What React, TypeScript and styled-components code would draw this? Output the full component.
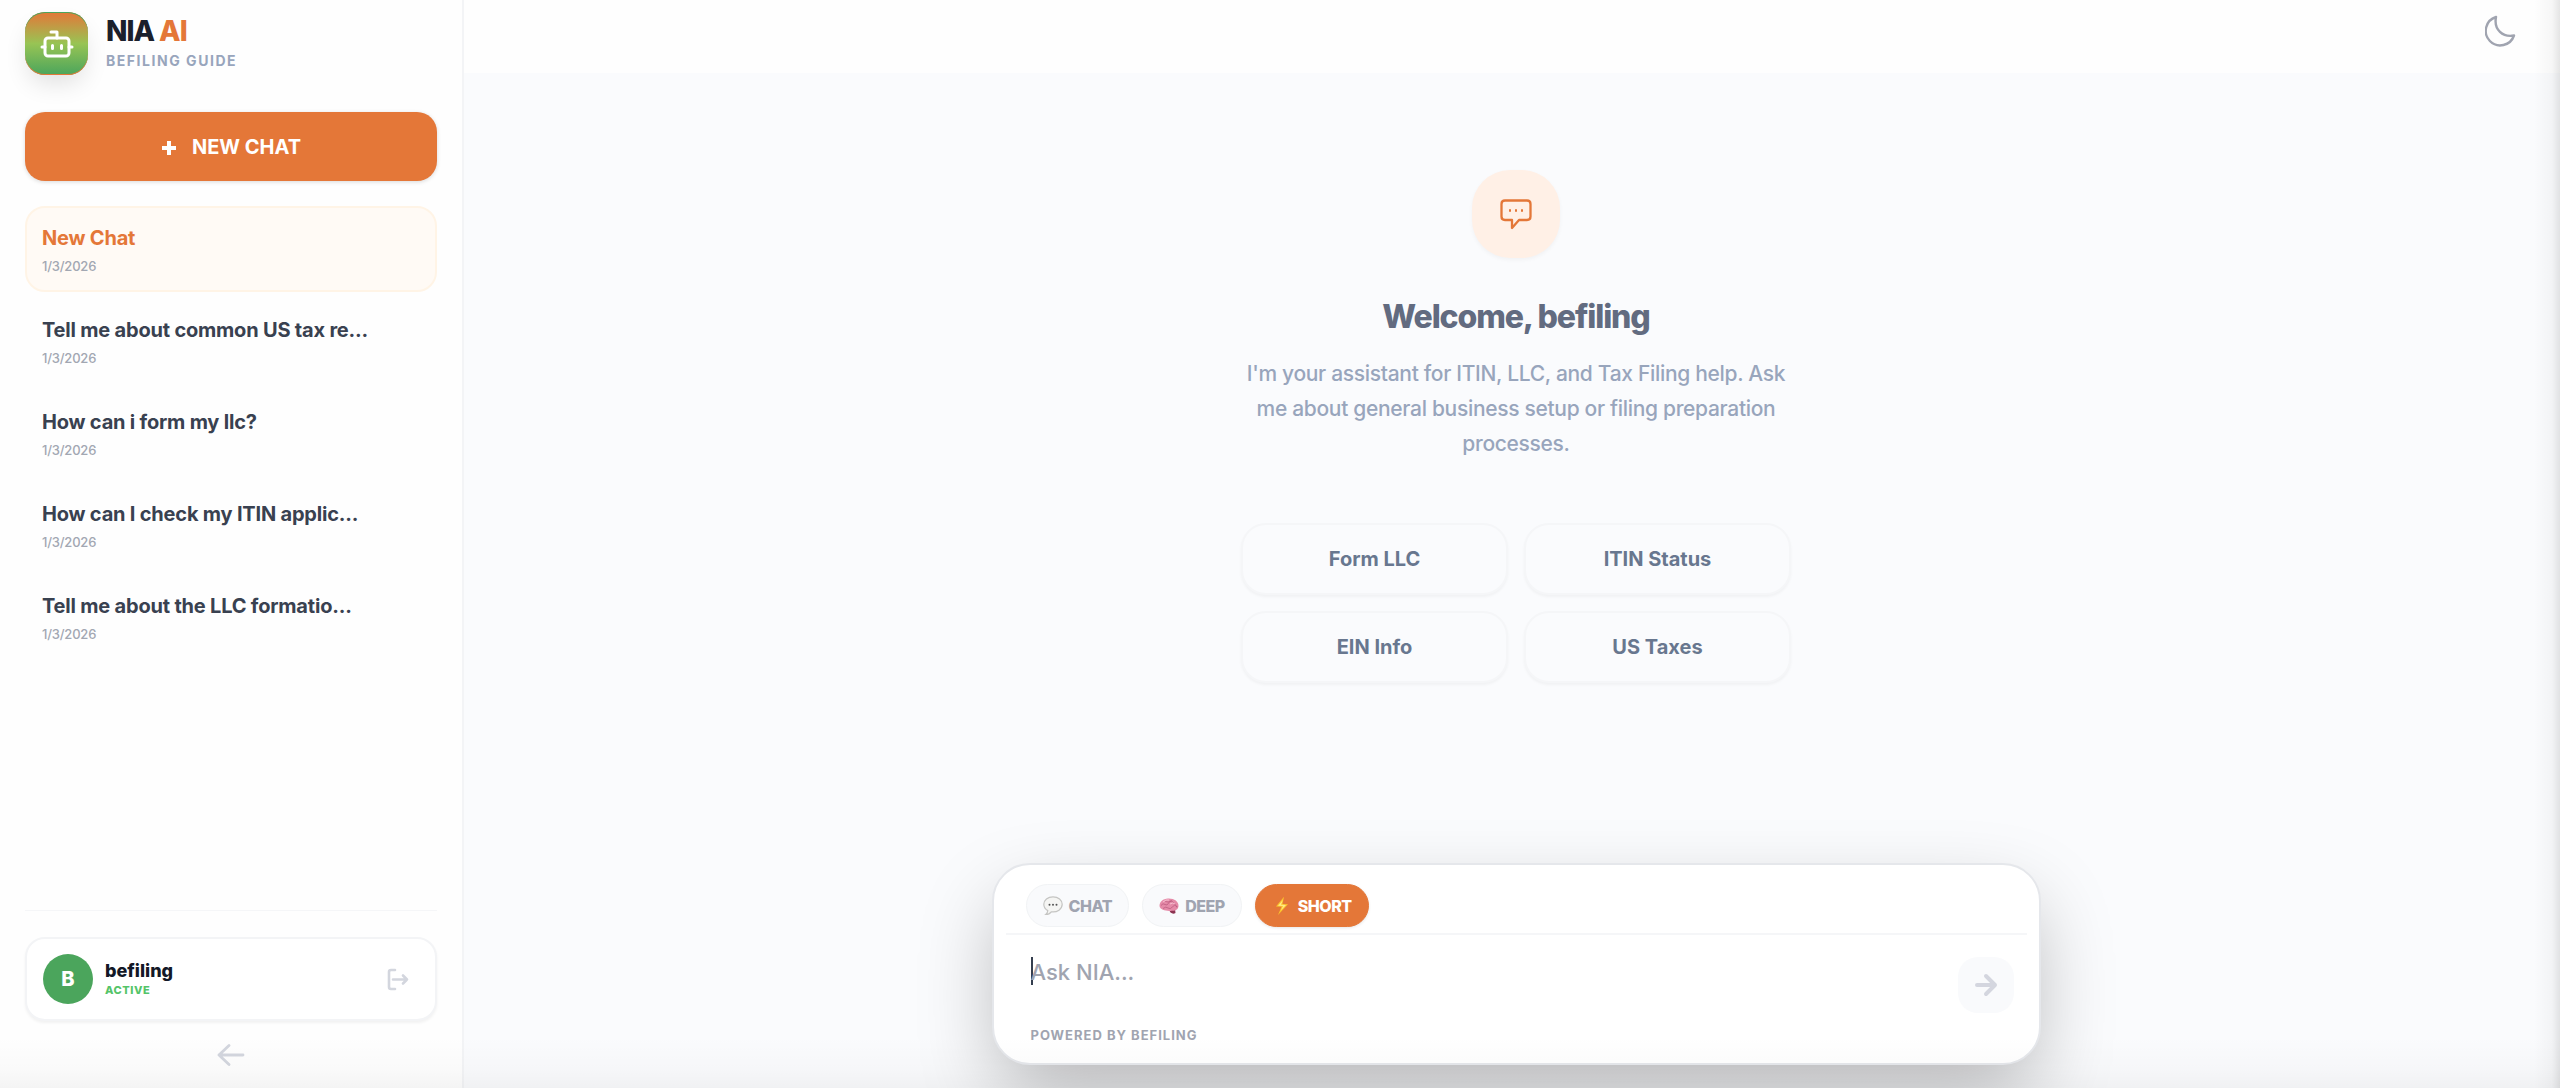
import React, { useState } from "react";
import styled, { createGlobalStyle, css } from "styled-components";

const GlobalStyle = createGlobalStyle`
  *, *::before, *::after { box-sizing: border-box; }
  body { margin: 0; background: #fafbfd; }
  body, button, textarea { font-family: Inter, "Liberation Sans", sans-serif; }
  button { margin: 0; padding: 0; border: 0; background: none; cursor: pointer; }
  h1, h2, p { margin: 0; }
`;

const Shell = styled.div`
  position: relative;
  display: flex;
  height: 100vh;
  overflow: hidden;
  background: #fafbfd;
`;

const EdgeShade = styled.div`
  position: absolute;
  inset: 0;
  pointer-events: none;
  background:
    linear-gradient(to left, rgba(0, 0, 0, 0.1), rgba(0, 0, 0, 0.03) 8px, transparent 26px),
    linear-gradient(to top, rgba(0, 0, 0, 0.04), rgba(0, 0, 0, 0.015) 20px, transparent 52px);
`;

const Sidebar = styled.aside`
  display: flex;
  flex-direction: column;
  flex: 0 0 464px;
  padding: 12px 25px 22px;
  border-right: 2px solid #f3f4f6;
  background: #fefefe;
`;

const Brand = styled.header`
  display: flex;
  gap: 18px;
  margin-bottom: 37px;
`;

const Logo = styled.div`
  display: grid;
  place-items: center;
  width: 63px;
  height: 63px;
  border-radius: 20px;
  background: linear-gradient(#e47738, #98c454 50%, #4ba55c);
  box-shadow: 0 12px 24px -4px rgba(0, 0, 0, 0.12), inset 0 1px #4ba55c, inset 0 -1px #e47738;
`;

const BrandName = styled.h1`
  padding-top: 1px;
  color: #1b202c;
  font-size: 28px;
  font-weight: 800;
  line-height: 36px;
  letter-spacing: -1px;
  span { color: #e47738; }
`;

const BrandTag = styled.p`
  color: #98a5bc;
  font-size: 14px;
  font-weight: 700;
  line-height: 24px;
  letter-spacing: 0.11em;
`;

const NewChat = styled.button`
  display: flex;
  align-items: center;
  justify-content: center;
  gap: 15px;
  height: 69px;
  margin-bottom: 25px;
  border-radius: 20px;
  background: #e47738;
  box-shadow: 0 1px 4px rgba(0, 0, 0, 0.15);
  color: #fff;
  font-size: 20px;
  font-weight: 700;
`;

const History = styled.nav`
  display: flex;
  flex: 1;
  flex-direction: column;
  gap: 6px;
`;

const HistoryItem = styled.button<{ $active?: boolean }>`
  display: flex;
  flex-direction: column;
  justify-content: center;
  gap: 4px;
  height: 86px;
  padding: 2px 15px 0;
  border: 2px solid ${(p) => (p.$active ? "#fff4e6" : "transparent")};
  border-radius: 20px;
  background: ${(p) => (p.$active ? "#fffaf5" : "transparent")};
  color: ${(p) => (p.$active ? "#e47738" : "#394150")};
  letter-spacing: -0.015em;
  text-align: left;
`;

const ItemTitle = styled.span`
  font-size: 20px;
  font-weight: 700;
  line-height: 28px;
`;

const ItemDate = styled.span`
  color: #a2a7b2;
  font-size: 13px;
  font-weight: 500;
  line-height: 20px;
`;

const Account = styled.footer`
  display: flex;
  flex-direction: column;
  align-items: center;
  gap: 23px;
  padding-top: 26px;
  border-top: 1px solid #f5f6f8;
`;

const Profile = styled.div`
  display: flex;
  align-items: center;
  gap: 12px;
  width: 100%;
  height: 84px;
  padding: 0 26px 0 16px;
  border: 2px solid #f3f4f6;
  border-radius: 20px;
  background: #fff;
  box-shadow: 0 2px 3px rgba(0, 0, 0, 0.05);
`;

const Avatar = styled.div`
  display: grid;
  place-items: center;
  width: 50px;
  height: 50px;
  border-radius: 50%;
  background: #4ba55c;
  color: #fff;
  font-size: 20px;
  font-weight: 800;
`;

const Who = styled.div`
  flex: 1;
`;

const UserName = styled.p`
  color: #131827;
  font-size: 18px;
  font-weight: 800;
  line-height: 22px;
`;

const Status = styled.p`
  color: #54c468;
  font-size: 11px;
  font-weight: 800;
  line-height: 16px;
  letter-spacing: 0.05em;
`;

const IconButton = styled.button<{ $color: string }>`
  display: grid;
  place-items: center;
  color: ${(p) => p.$color};
`;

const Main = styled.main`
  display: flex;
  flex: 1;
  flex-direction: column;
  min-width: 0;
`;

const TopBar = styled.header`
  display: flex;
  justify-content: flex-end;
  align-items: flex-start;
  height: 73px;
  padding: 15px 44px 0;
  background: #fefefe;
`;

const Conversation = styled.div`
  display: flex;
  flex: 1;
  flex-direction: column;
  padding-left: 8px;
`;

const Welcome = styled.section`
  display: flex;
  flex: 1;
  flex-direction: column;
  align-items: center;
  padding-top: 97px;
`;

const Bubble = styled.div`
  display: grid;
  place-items: center;
  width: 88px;
  height: 88px;
  border-radius: 38px;
  background: #fff0e6;
  box-shadow: 0 2px 4px rgba(0, 0, 0, 0.04);
  color: #e47738;
`;

const Greeting = styled.h2`
  margin-top: 39px;
  color: #626b80;
  font-size: 32px;
  font-weight: 800;
  line-height: 40px;
  letter-spacing: -0.035em;
`;

const Intro = styled.p`
  max-width: 550px;
  margin-top: 19px;
  color: #98a5bc;
  font-size: 21px;
  font-weight: 500;
  line-height: 35px;
  letter-spacing: -0.015em;
  text-align: center;
`;

const Topics = styled.div`
  display: grid;
  grid-template-columns: 1fr 1fr;
  gap: 16px;
  width: 100%;
  max-width: 550px;
  margin-top: 62px;
`;

const Topic = styled.button`
  height: 72px;
  border: 2px solid #f5f6f8;
  border-radius: 25px;
  background: #fafbfd;
  box-shadow: 0 2px 3px rgba(0, 0, 0, 0.04);
  color: #68778f;
  font-size: 20px;
  font-weight: 700;
`;

const Composer = styled.form`
  align-self: center;
  width: calc(100% - 50px);
  max-width: 1049px;
  margin-bottom: 23px;
  padding: 17px 12px 18px;
  border: 2px solid #e5e7eb;
  border-radius: 38px;
  background: #fff;
  box-shadow: 0 32px 80px -8px rgba(0, 0, 0, 0.28);
`;

const Modes = styled.div`
  display: flex;
  gap: 13px;
  padding: 2px 20px 6px;
  border-bottom: 2px solid #f5f6f8;
`;

const Mode = styled.button<{ $active?: boolean }>`
  display: flex;
  align-items: center;
  gap: 6px;
  height: 43px;
  padding: 0 16px;
  border: 1px solid #f1f3f5;
  border-radius: 22px;
  background: #f9fafc;
  color: #a0a4b0;
  font-size: 16px;
  font-weight: 800;
  letter-spacing: -0.03em;
  ${(p) =>
    p.$active &&
    css`
      border-color: #e47738;
      background: #e47738;
      color: #fff;
      box-shadow: 0 1px 3px rgba(0, 0, 0, 0.1);
    `}
`;

const Entry = styled.div`
  display: flex;
  align-items: flex-start;
  justify-content: space-between;
  padding: 22px 13px 0 25px;
`;

const Prompt = styled.textarea`
  flex: 1;
  height: 56px;
  padding: 0;
  border: 0;
  outline: 0;
  resize: none;
  background: none;
  color: #343e4e;
  font-size: 22px;
  font-weight: 500;
  line-height: 30px;
  &::placeholder { color: #a0a4b0; opacity: 1; }
`;

const Caret = styled.span`
  width: 2px;
  height: 28px;
  margin-right: -2px;
  background: #343e4e;
`;

const Send = styled.button`
  display: grid;
  place-items: center;
  width: 56px;
  height: 56px;
  border-radius: 20px;
  background: #f9fafc;
  color: #d4d6df;
`;

const Powered = styled.p`
  padding: 12px 25px 0;
  color: #a0a4b0;
  font-size: 13px;
  font-weight: 700;
  line-height: 20px;
  letter-spacing: 1px;
`;

const BotIcon = () => (
  <svg width="36" height="36" viewBox="0 0 24 24" fill="none" stroke="currentColor" strokeWidth="2" strokeLinecap="round" strokeLinejoin="round" color="#fff">
    <path d="M12 8V4H8" />
    <rect width="16" height="12" x="4" y="8" rx="2" />
    <path d="M2 14h2M20 14h2M15 13v2M9 13v2" />
  </svg>
);

const PlusIcon = () => (
  <svg width="16" height="16" viewBox="0 0 16 16" fill="none" stroke="currentColor" strokeWidth="4">
    <path d="M8 2v14M1 9h14" />
  </svg>
);

const LogoutIcon = () => (
  <svg width="22" height="23" viewBox="0 0 22 23" fill="none" stroke="currentColor" strokeWidth="2.600" strokeLinecap="round" strokeLinejoin="round">
    <path d="M8 2H4Q2 2 2 4V19Q2 21 4 21H8M6 11.500H20M16 7.500L20 11.500L16 15.500" />
  </svg>
);

const BackIcon = () => (
  <svg width="28" height="22" viewBox="0 0 28 22" fill="none" stroke="currentColor" strokeWidth="2.800" strokeLinecap="round" strokeLinejoin="round">
    <path d="M26 11H2M12 1.500L2 11L12 20.500" />
  </svg>
);

const MoonIcon = () => (
  <svg width="31" height="32" viewBox="0 0 31 32" fill="none" stroke="currentColor" strokeWidth="2.400" strokeLinejoin="round">
    <path d="M11 2A14.500 14.500 0 1 0 29 20.500C18 22.500 8.500 15 11 2Z" />
  </svg>
);

const BubbleIcon = () => (
  <svg width="32" height="31" viewBox="0 0 32 31" fill="none" stroke="currentColor" strokeWidth="2.300" strokeLinejoin="round">
    <path d="M5 1.500H27Q30.500 1.500 30.500 5V17.500Q30.500 21 27 21H19L12 29V21H5Q1.500 21 1.500 17.500V5Q1.500 1.500 5 1.500Z" />
    <path d="M9 11.500h2M15 11.500h2M21 11.500h2" />
  </svg>
);

const SendIcon = () => (
  <svg width="24" height="24" viewBox="0 0 24 24" fill="none" stroke="currentColor" strokeWidth="4" strokeLinecap="round" strokeLinejoin="round">
    <path d="M3 12H21M12 3L21 12L12 21" />
  </svg>
);

const SpeechEmoji = () => (
  <svg width="20" height="20" viewBox="0 0 20 20">
    <path d="M10 .8C4.800 .8 .8 4 .8 8.300c0 2.800 1.600 5 4 6.300 0 1.700-.8 2.900-2 3.900 2.500 0 4.300-1 5.500-2.700 6 .8 10.900-2.700 10.900-7.500C19.200 4 15.200 .8 10 .8Z" fill="#f5f5f3" stroke="#c5c5c3" strokeWidth="1.200" />
    <g fill="#555"><circle cx="6.500" cy="8.800" r="1" /><circle cx="10" cy="8.800" r="1" /><circle cx="13.500" cy="8.800" r="1" /></g>
  </svg>
);

const BrainEmoji = () => (
  <svg width="20" height="20" viewBox="0 0 20 20">
    <path d="M10 14L16 13L16.500 17Q14 18.500 11.500 16.500Z" fill="#8d3452" />
    <path d="M.5 10C.5 6 4 2.800 9 2.600c6-.3 10.700 2.900 10.500 7.400-.2 3.500-3 5-6.500 4.700C8 15.500 1 14 .5 10Z" fill="#e58aa8" />
    <path d="M2 9.500q2-3 4-1t4-2 5 1 3 2.500M4 12.500q3-2.500 5-.5t5-1.500 4 1M6 5q2 1 3 1t4-1" fill="none" stroke="#bd5c80" strokeWidth=".8" />
    <path d="M4 6q3-3 6-2M11 8q3-2 5 0" fill="none" stroke="#f7bfd0" strokeWidth="1" />
  </svg>
);

const BoltEmoji = () => (
  <svg width="20" height="20" viewBox="0 0 20 20">
    <path d="M12 .8L4 10.500L9.500 10.800L6 19L16 8.300L10.500 8Z" fill="#fbc52d" />
    <path d="M10.800 4L6 9.800L11 10L8.800 14.500L14 9L9 8.700Z" fill="#ffea86" />
  </svg>
);

const chats = ["New Chat", "Tell me about common US tax re...", "How can i form my llc?", "How can I check my ITIN applic...", "Tell me about the LLC formatio..."];
const topics = ["Form LLC", "ITIN Status", "EIN Info", "US Taxes"];
const modes = [
  { label: "CHAT", Icon: SpeechEmoji },
  { label: "DEEP", Icon: BrainEmoji },
  { label: "SHORT", Icon: BoltEmoji },
];

export default function App() {
  const [mode, setMode] = useState("SHORT");
  const [chat, setChat] = useState(0);
  const [text, setText] = useState("");
  return (
    <Shell>
      <GlobalStyle />
      <Sidebar>
        <Brand>
          <Logo><BotIcon /></Logo>
          <div>
            <BrandName>NIA <span>AI</span></BrandName>
            <BrandTag>BEFILING GUIDE</BrandTag>
          </div>
        </Brand>
        <NewChat type="button"><PlusIcon />NEW CHAT</NewChat>
        <History aria-label="Chats">
          {chats.map((title, i) => (
            <HistoryItem key={title} type="button" $active={i === chat} onClick={() => setChat(i)}>
              <ItemTitle>{title}</ItemTitle>
              <ItemDate>1/3/2026</ItemDate>
            </HistoryItem>
          ))}
        </History>
        <Account>
          <Profile>
            <Avatar>B</Avatar>
            <Who>
              <UserName>befiling</UserName>
              <Status>ACTIVE</Status>
            </Who>
            <IconButton type="button" $color="#d3d6de" aria-label="Log out"><LogoutIcon /></IconButton>
          </Profile>
          <IconButton type="button" $color="#d3d6de" aria-label="Collapse sidebar"><BackIcon /></IconButton>
        </Account>
      </Sidebar>
      <Main>
        <TopBar>
          <IconButton type="button" $color="#a0a4b0" aria-label="Dark mode"><MoonIcon /></IconButton>
        </TopBar>
        <Conversation>
          <Welcome>
            <Bubble><BubbleIcon /></Bubble>
            <Greeting>Welcome, befiling</Greeting>
            <Intro>I'm your assistant for ITIN, LLC, and Tax Filing help. Ask me about general business setup or filing preparation processes.</Intro>
            <Topics>
              {topics.map((t) => <Topic key={t} type="button">{t}</Topic>)}
            </Topics>
          </Welcome>
          <Composer onSubmit={(e) => e.preventDefault()}>
            <Modes>
              {modes.map(({ label, Icon }) => (
                <Mode key={label} type="button" $active={label === mode} onClick={() => setMode(label)}>
                  <Icon />{label}
                </Mode>
              ))}
            </Modes>
            <Entry>
              {text === "" && <Caret />}
              <Prompt aria-label="Message" placeholder="Ask NIA..." value={text} onChange={(e) => setText(e.target.value)} />
              <Send type="submit" aria-label="Send"><SendIcon /></Send>
            </Entry>
            <Powered>POWERED BY BEFILING</Powered>
          </Composer>
        </Conversation>
      </Main>
      <EdgeShade />
    </Shell>
  );
}
